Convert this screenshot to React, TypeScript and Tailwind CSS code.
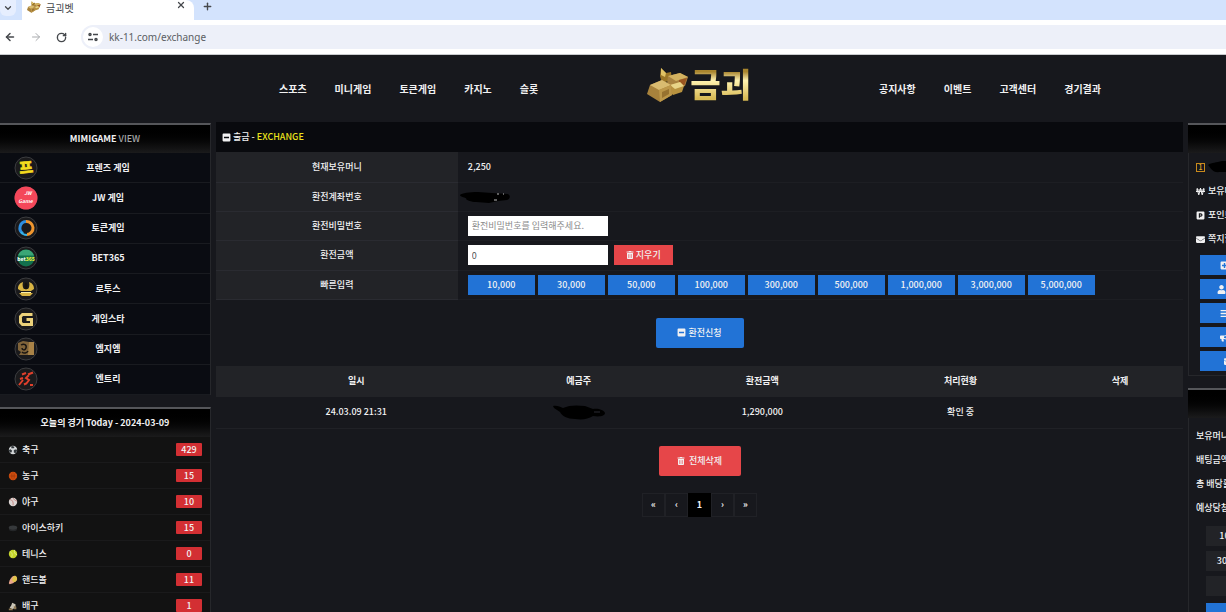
import { useState } from "react";
import type { ReactNode } from "react";
import {
  FaBars,
  FaBullhorn,
  FaEnvelope,
  FaMinusSquare,
  FaParking,
  FaPlusSquare,
  FaTrashAlt,
  FaUser,
  FaWonSign,
} from "react-icons/fa";
import {
  LuArrowLeft,
  LuArrowRight,
  LuChevronDown,
  LuPlus,
  LuRotateCw,
  LuX,
} from "react-icons/lu";

interface IGame {
  name: string;
  art: ReactNode;
}

interface ISport {
  name: string;
  count: number;
  art: ReactNode;
}

const leftMenu = ["스포츠", "미니게임", "토큰게임", "카지노", "슬롯"];
const rightMenu = ["공지사항", "이벤트", "고객센터", "경기결과"];

const amounts = [10000, 30000, 50000, 100000, 300000, 500000, 1000000, 3000000, 5000000];

const games: IGame[] = [
  {
    name: "프렌즈 게임",
    art: (
      <text x="12" y="17" textAnchor="middle" fontSize="15" fontWeight="900" fill="#f5dc1e" stroke="#f5dc1e" strokeWidth=".6" transform="rotate(-6 12 12)">
        프
      </text>
    ),
  },
  {
    name: "JW 게임",
    art: (
      <>
        <circle cx="12" cy="12" r="11.500" fill="#f4475a" />
        <text x="14" y="9" textAnchor="middle" fontSize="5" fontStyle="italic" fontWeight="700" fill="#fff">JW</text>
        <text x="11.500" y="17" textAnchor="middle" fontSize="5" fontStyle="italic" fontWeight="700" fill="#fff">Game</text>
      </>
    ),
  },
  {
    name: "토큰게임",
    art: (
      <>
        <path d="M12 5.500a6.500 6.500 0 0 0-3 12" fill="none" stroke="#2e8fe0" strokeWidth="3" />
        <path d="M12 5.500a6.500 6.500 0 0 1 1 13" fill="none" stroke="#f0962e" strokeWidth="3" />
        <path d="M7 16a7 7 0 0 0 6 3" fill="none" stroke="#35b4e8" strokeWidth="2" />
      </>
    ),
  },
  {
    name: "BET365",
    art: (
      <>
        <circle cx="12" cy="12" r="8.500" fill="#12714d" />
        <path d="M4 9.500a8.500 8.500 0 0 1 16 0z" fill="#3aa676" />
        <text x="12" y="14.500" textAnchor="middle" fontSize="5" fontWeight="900" fill="#eefaf0">
          bet<tspan fill="#e6ee3c">365</tspan>
        </text>
      </>
    ),
  },
  {
    name: "로투스",
    art: (
      <>
        <path d="M4 12c0-4 2-6 5-7-1 3 0 6 1 7h4c1-1 2-4 1-7 3 1 5 3 5 7l-3 2H7zM5 16h14l-3 3H8z" fill="#d9b544" />
        <path d="M12 5c-2 3-2 5 0 8 2-3 2-5 0-8z" fill="#14100a" />
        <path d="M7 15.500h10" stroke="#fff2a8" />
      </>
    ),
  },
  {
    name: "게임스타",
    art: <path d="M18.500 7.500h-10l-2 2v6l2 2h9v-5h-5" fill="none" stroke="#ecd27a" strokeWidth="3" />,
  },
  {
    name: "엠지엠",
    art: (
      <>
        <path d="M4 6l5-2 6 1v13H5l2-3-3-2z" fill="#80643a" />
        <path d="M15 5h5v13h-6z" fill="#a98347" />
        <path d="M7 8c3-2 6 0 5 3s-4 2-4 0M8 15c2 2 5 1 6-1" fill="none" stroke="#191511" strokeWidth="1.500" />
      </>
    ),
  },
  {
    name: "엔트리",
    art: <path d="M8 7.500l4-1.500M14 7.500l5-2M15 8l-3 3 3 2-3 4M9 11l-3 1M9 13l-4 5M10 17.500l2-1M16 18h3" fill="none" stroke="#e0402c" strokeWidth="2" />,
  },
];

const sports: ISport[] = [
  {
    name: "축구",
    count: 429,
    art: (
      <>
        <circle cx="6" cy="6" r="5" fill="#d5d8da" />
        <path d="M4 1l4 1-1 2-3 0zM1 6l2-1 2 2-1 2-2 0zM7 6l3-1 1 2-2 3-2-1z" fill="#33383c" />
      </>
    ),
  },
  {
    name: "농구",
    count: 15,
    art: (
      <>
        <circle cx="6" cy="6" r="5" fill="#d5500f" />
        <path d="M1 6h10M6 1v10M3 2c2 3 2 5 0 8M9 2c-2 3-2 5 0 8" fill="none" stroke="#8e300a" strokeWidth=".6" />
      </>
    ),
  },
  {
    name: "야구",
    count: 10,
    art: (
      <>
        <circle cx="6" cy="6" r="5" fill="#dcd5d3" />
        <path d="M2 3c3 0 5 3 4 7M6 1c1 2 2 3 5 4" fill="none" stroke="#b8655f" strokeWidth=".8" />
      </>
    ),
  },
  {
    name: "아이스하키",
    count: 15,
    art: (
      <>
        <ellipse cx="6" cy="7" rx="5" ry="3" fill="#242628" />
        <ellipse cx="6" cy="5.500" rx="5" ry="2.500" fill="#36393b" />
      </>
    ),
  },
  {
    name: "테니스",
    count: 0,
    art: (
      <>
        <circle cx="6" cy="6" r="5" fill="#c5d62a" />
        <path d="M2 3c3 1 4 4 2 7M8 1c-1 3 0 5 3 6" fill="none" stroke="#eef5a8" strokeWidth=".8" />
      </>
    ),
  },
  {
    name: "핸드볼",
    count: 11,
    art: (
      <>
        <path d="M1 10C2 5 5 1 8 1l2 1 1 4-5 4-4 1z" fill="#e8a58c" />
        <path d="M5 6c0-3 2-5 4-5 3 2 2 5 0 7-2 1-4 0-4-2z" fill="#e0c34a" />
      </>
    ),
  },
  {
    name: "배구",
    count: 1,
    art: (
      <>
        <path d="M5 2l4 2v4L5 10 2 8l2-3z" fill="#c9c3b4" />
        <path d="M1 9h4l1 2H1zM7 6l3 1v3H7z" fill="#8f7a55" />
      </>
    ),
  },
];

const GoldBars = ({ className }: { className: string }) => (
  <svg viewBox="0 0 44 36" className={className} aria-hidden="true">
    <path d="M15 1l5 5 5-1 1 8-10 3-2-7z" fill="#9a7526" />
    <path d="M15 1l5 5-1 4-4-2z" fill="#e0c264" />
    <path d="M22 9l12-3 8 4-3 9-12 4-6-6z" fill="#a88240" />
    <path d="M22 9l12-3 8 4-12 4z" fill="#d3b260" />
    <path d="M33 13l8-2-3 8-5 1z" fill="#9a5520" />
    <path d="M24 18l10-3 4 4-2 6-9 3-4-4z" fill="#b8923f" />
    <path d="M24 18l10-3 4 4-9 3z" fill="#e8d488" />
    <path d="M4 18l12-5 9 5 1 10-12 7L1 27z" fill="#a8823c" />
    <path d="M4 18l12-5 9 5-12 5z" fill="#d9bb70" />
    <path d="M13 23l12-5 1 10-12 7z" fill="#bd9749" />
    <path d="M16 25l7-3v5l-7 4z" fill="#98722f" />
  </svg>
);

const BrowserBar = () => (
  <div className="shrink-0 text-[#45484c]">
    <div className="flex h-5 bg-[#d3e3fd]">
      <div className="flex w-[22px] items-start">
        <button aria-label="탭 검색" className="flex h-4 w-4 items-center justify-center rounded-b-md bg-[#e6eefe]">
          <LuChevronDown size={10} strokeWidth={3} />
        </button>
      </div>
      <div className="flex w-[172px] items-start rounded-tr-lg bg-white pl-1">
        <GoldBars className="mt-px h-3 w-4" />
        <span className="ml-1 text-[10px] leading-[15px]">금괴벳</span>
        <button aria-label="닫기" className="mr-2 ml-auto">
          <LuX size={10} strokeWidth={3} />
        </button>
      </div>
      <button aria-label="새 탭" className="ml-2 h-3">
        <LuPlus size={11} strokeWidth={3} />
      </button>
    </div>
    <div className="flex h-[35px] items-center border-b border-[#c9cbce] bg-white pl-1">
      <button aria-label="뒤로"><LuArrowLeft size={12} strokeWidth={3} /></button>
      <button aria-label="앞으로" className="ml-3.5 text-[#a9abae]"><LuArrowRight size={12} strokeWidth={2} /></button>
      <button aria-label="새로고침" className="ml-3.5"><LuRotateCw size={11} strokeWidth={3} /></button>
      <div className="ml-3.5 flex h-6 flex-1 items-center rounded-l-full bg-[#edf0f9] pl-0.5">
        <span className="flex h-5 w-5 items-center justify-center rounded-full bg-white">
          <svg viewBox="0 0 12 12" className="h-3 w-3" fill="none" stroke="currentColor" strokeWidth="1.500" aria-hidden="true">
            <circle cx="3" cy="3.500" r="1" />
            <path d="M6 3.500h5M1 8.500h5" />
            <circle cx="9" cy="8.500" r="1" />
          </svg>
        </span>
        <input
          aria-label="주소"
          defaultValue="kk-11.com/exchange"
          className="ml-1.5 flex-1 bg-transparent font-['Noto_Sans'] text-[10px] leading-4 text-[#5b5e63] outline-none"
        />
      </div>
    </div>
  </div>
);

const Menu = ({ items }: { items: string[] }) => (
  <ul className="flex gap-7 text-[10px] font-bold">
    {items.map((item) => (
      <li key={item}>
        <a href="#">{item}</a>
      </li>
    ))}
  </ul>
);

const Header = () => (
  <header className="flex h-[67px] shrink-0 items-center justify-center pl-[154px]">
    <Menu items={leftMenu} />
    <a href="#" aria-label="금괴" className="mr-[128px] ml-[108px] flex items-center pb-2">
      <GoldBars className="h-9 w-11" />
      <span className="bg-linear-to-b from-[#a8852e] from-20% via-[#fff3b0] via-40% to-[#d9bb55] to-80% bg-clip-text pb-1 text-[33px] leading-10 font-black text-transparent">
        금괴
      </span>
    </a>
    <Menu items={rightMenu} />
  </header>
);

const Panel = ({ title, children }: { title?: ReactNode; children: ReactNode }) => (
  <section className="border-t-2 border-r border-t-[#55565a] border-r-[#26272b]">
    <h2 className="flex h-7 items-center justify-center bg-linear-to-b from-black to-[#1b1b1c] text-[9px] font-bold">
      {title}
    </h2>
    {children}
  </section>
);

const Sidebar = () => (
  <aside className="flex w-[211px] shrink-0 flex-col gap-3 pt-px">
    <Panel title={<span>MIMIGAME <span className="font-medium text-[#a6a7a9]">VIEW</span></span>}>
      <ul className="grid h-[242px] grid-rows-8 bg-[#0a0c12]">
        {games.map((game) => (
          <li key={game.name} className="border-b border-[#191b20]">
            <a href="#" className="flex h-full items-center pl-3.5 font-bold">
              <svg viewBox="0 0 24 24" className="h-6 w-6" aria-hidden="true">
                <circle cx="12" cy="12" r="11" fill="#1a1a1c" stroke="#3c3d40" />
                {game.art}
              </svg>
              <span className="flex-1 pr-8 text-center">{game.name}</span>
            </a>
          </li>
        ))}
      </ul>
    </Panel>
    <Panel title="오늘의 경기 Today - 2024-03-09">
      <ul className="bg-[#121212]">
        {sports.map((sport) => (
          <li key={sport.name} className="flex h-[26px] items-center border-b border-[#1a1a1b] px-2 font-medium">
            <svg viewBox="0 0 12 12" className="h-2.5 w-2.5" aria-hidden="true">
              {sport.art}
            </svg>
            <a href="#" className="ml-1">{sport.name}</a>
            <span className="ml-auto h-[13px] w-[26px] rounded-[1px] bg-[#d32f33] text-center leading-[13px]">
              {sport.count}
            </span>
          </li>
        ))}
      </ul>
    </Panel>
  </aside>
);

const labelCell = "w-1/4 border-b border-[#2a2b31] bg-[#222327] text-center font-medium";
const valueCell = "border-b border-[#1d1e23] pl-2.5 font-medium";
const field = "block h-5 w-[140px] bg-white px-1 font-normal text-[#555] outline-none placeholder:text-[#8a8a8a]";

const ExchangeForm = () => {
  const [money, setMoney] = useState(0);

  return (
    <form onSubmit={(e) => e.preventDefault()}>
      <table className="w-full border-collapse">
        <tbody>
          <tr className="h-[30px]">
            <th className={labelCell}>현재보유머니</th>
            <td className={valueCell}>2,250</td>
          </tr>
          <tr className="h-[29px]">
            <th className={labelCell}>환전계좌번호</th>
            <td className="border-b border-[#1d1e23] pl-px">
              <svg viewBox="0 0 52 14" className="block h-3.5 w-[52px]" aria-hidden="true">
                <path d="M1 5c2-2 9-3 18-3l14 1 16 1c3 2 2 5-1 6l-9 1-9 2-13-1c-5 0-9-2-10-3 2-1-6-2-6-4z" fill="#000" />
                <path d="M38 4h2M44 4h1M35 10h3" stroke="#bbb" />
              </svg>
            </td>
          </tr>
          <tr className="h-[29px]">
            <th className={labelCell}><label htmlFor="password">환전비밀번호</label></th>
            <td className={valueCell}>
              <input id="password" type="password" placeholder="환전비밀번호를 입력해주세요." className={field} />
            </td>
          </tr>
          <tr className="h-[30px]">
            <th className={labelCell}><label htmlFor="money">환전금액</label></th>
            <td className={valueCell}>
              <div className="flex gap-1.5">
                <input
                  id="money"
                  value={money.toLocaleString("en-US")}
                  onChange={(e) => setMoney(Number(e.target.value.replace(/\D/g, "")))}
                  className={field}
                />
                <button
                  type="button"
                  onClick={() => setMoney(0)}
                  className="flex h-5 w-[59px] items-center justify-center gap-0.5 bg-[#e64649]"
                >
                  <FaTrashAlt size={8} />
                  지우기
                </button>
              </div>
            </td>
          </tr>
          <tr className="h-[29px]">
            <th className={labelCell}>빠른입력</th>
            <td className={valueCell}>
              <div className="flex gap-[3px]">
                {amounts.map((amount) => (
                  <button
                    key={amount}
                    type="button"
                    onClick={() => setMoney(money + amount)}
                    className="h-5 w-[67px] bg-[#2273d6]"
                  >
                    {amount.toLocaleString("en-US")}
                  </button>
                ))}
              </div>
            </td>
          </tr>
        </tbody>
      </table>
      <button className="mx-auto mt-[18px] flex h-[30px] w-[88px] items-center justify-center gap-0.5 rounded-[2px] bg-[#2273d6] font-medium">
        <FaMinusSquare size={9} />
        환전신청
      </button>
    </form>
  );
};

const History = () => (
  <>
    <table className="mt-[18px] w-full table-fixed text-center">
      <thead className="bg-[#222327] font-bold">
        <tr className="h-[31px]">
          <th className="w-[29%]">일시</th>
          <th className="w-[17%]">예금주</th>
          <th className="w-[21%]">환전금액</th>
          <th className="w-[20%]">처리현황</th>
          <th>삭제</th>
        </tr>
      </thead>
      <tbody className="font-medium">
        <tr className="h-8 border-b border-[#202126]">
          <td>24.03.09 21:31</td>
          <td>
            <svg viewBox="0 0 54 16" className="mx-auto block h-4 w-[54px]" aria-hidden="true">
              <path d="M1 2c4-1 7 1 10 2 6-3 14-3 22-2l8 3c5-1 11 1 12 4 0 3-5 4-12 3-5 3-10 4-18 3-8 0-13-3-15-7L2 4z" fill="#000" />
              <path d="M42 8l6 0" stroke="#1c1d22" strokeWidth="1.500" />
            </svg>
          </td>
          <td>1,290,000</td>
          <td>확인 중</td>
          <td></td>
        </tr>
      </tbody>
    </table>
    <button className="mx-auto mt-[17px] flex h-[30px] w-[82px] items-center justify-center gap-1 rounded-[2px] bg-[#e64649] font-medium">
      <FaTrashAlt size={8} />
      전체삭제
    </button>
    <nav className="mt-[17px] flex justify-center font-bold">
      {["«", "‹", "1", "›", "»"].map((page) => (
        <a
          key={page}
          href="#"
          className={
            page === "1"
              ? "flex h-6 w-[23px] items-center justify-center bg-black"
              : "flex h-6 w-[23px] items-center justify-center border border-[#202126]"
          }
        >
          {page}
        </a>
      ))}
    </nav>
  </>
);

const infoRow = "flex h-6 items-center gap-[3px] pl-[7px] font-medium";
const sideButton = "flex h-5 w-[180px] items-center bg-[#2273d6]";
const betButton = "h-5 w-[55px] bg-[#222327]";

const MyPanel = () => (
  <aside className="w-[38px] shrink-0 overflow-hidden pt-px">
    <div className="flex w-[210px] flex-col gap-3 whitespace-nowrap">
      <Panel>
        <div className="border-b border-l border-[#26272b] pt-0.5">
          <div className={infoRow}>
            <span className="h-[9px] w-[9px] border border-[#c98a1c] text-center text-[7px] leading-[7px] text-[#e0a52c]">1</span>
            <svg viewBox="0 0 60 16" className="h-4 w-[60px]" aria-hidden="true">
              <path d="M0 6c4-3 8-2 14-4l40 1v10H12C4 14 3 9 0 6z" fill="#000" />
            </svg>
          </div>
          <div className={infoRow}><FaWonSign size={9} />보유머니</div>
          <div className={infoRow}><FaParking size={9} />포인트</div>
          <div className={infoRow}><FaEnvelope size={9} />쪽지함</div>
          <div className="flex flex-col gap-1 pt-1 pb-1 pl-[11px]">
            <button aria-label="충전" className={sideButton}><FaPlusSquare size={9} className="ml-5" /></button>
            <button aria-label="내정보" className={sideButton}><FaUser size={9} className="ml-[17px]" /></button>
            <button aria-label="내역" className={sideButton}><FaBars size={9} className="ml-5" /></button>
            <button aria-label="공지" className={sideButton}><FaBullhorn size={9} className="ml-5" /></button>
            <button aria-label="쪽지" className={sideButton}><FaEnvelope size={9} className="ml-6" /></button>
          </div>
        </div>
      </Panel>
      <Panel>
        <div className="border-l border-[#26272b] pt-1.5 font-medium">
          <div className={infoRow}>보유머니</div>
          <div className={infoRow}>배팅금액</div>
          <div className={infoRow}>총 배당률</div>
          <div className={infoRow}>예상당첨금</div>
          <div className="flex flex-col gap-[5px] pt-1.5 pl-[17px]">
            <button className={betButton}>10,000</button>
            <button className={betButton}>300,000</button>
            <button aria-label="직접입력" className={betButton}></button>
            <button aria-label="배팅하기" className="mt-0.5 h-5 w-[170px] bg-[#2273d6]"></button>
          </div>
        </div>
      </Panel>
    </div>
  </aside>
);

const App = () => {
  return (
    <div className="flex h-screen flex-col overflow-hidden bg-[#17181d] font-['Noto_Sans_CJK_KR','Noto_Sans',sans-serif] text-[9px] leading-3 text-[#f1f1f2]">
      <BrowserBar />
      <Header />
      <div className="flex gap-[5px]">
        <Sidebar />
        <main className="min-w-0 flex-1">
          <h1 className="flex h-[30px] items-center gap-0.5 bg-[#090a0e] pl-1.5 font-medium">
            <FaMinusSquare size={9} />
            <span>출금 - <span className="text-[#eae21c]">EXCHANGE</span></span>
          </h1>
          <ExchangeForm />
          <History />
        </main>
        <MyPanel />
      </div>
    </div>
  );
};

export default App;
